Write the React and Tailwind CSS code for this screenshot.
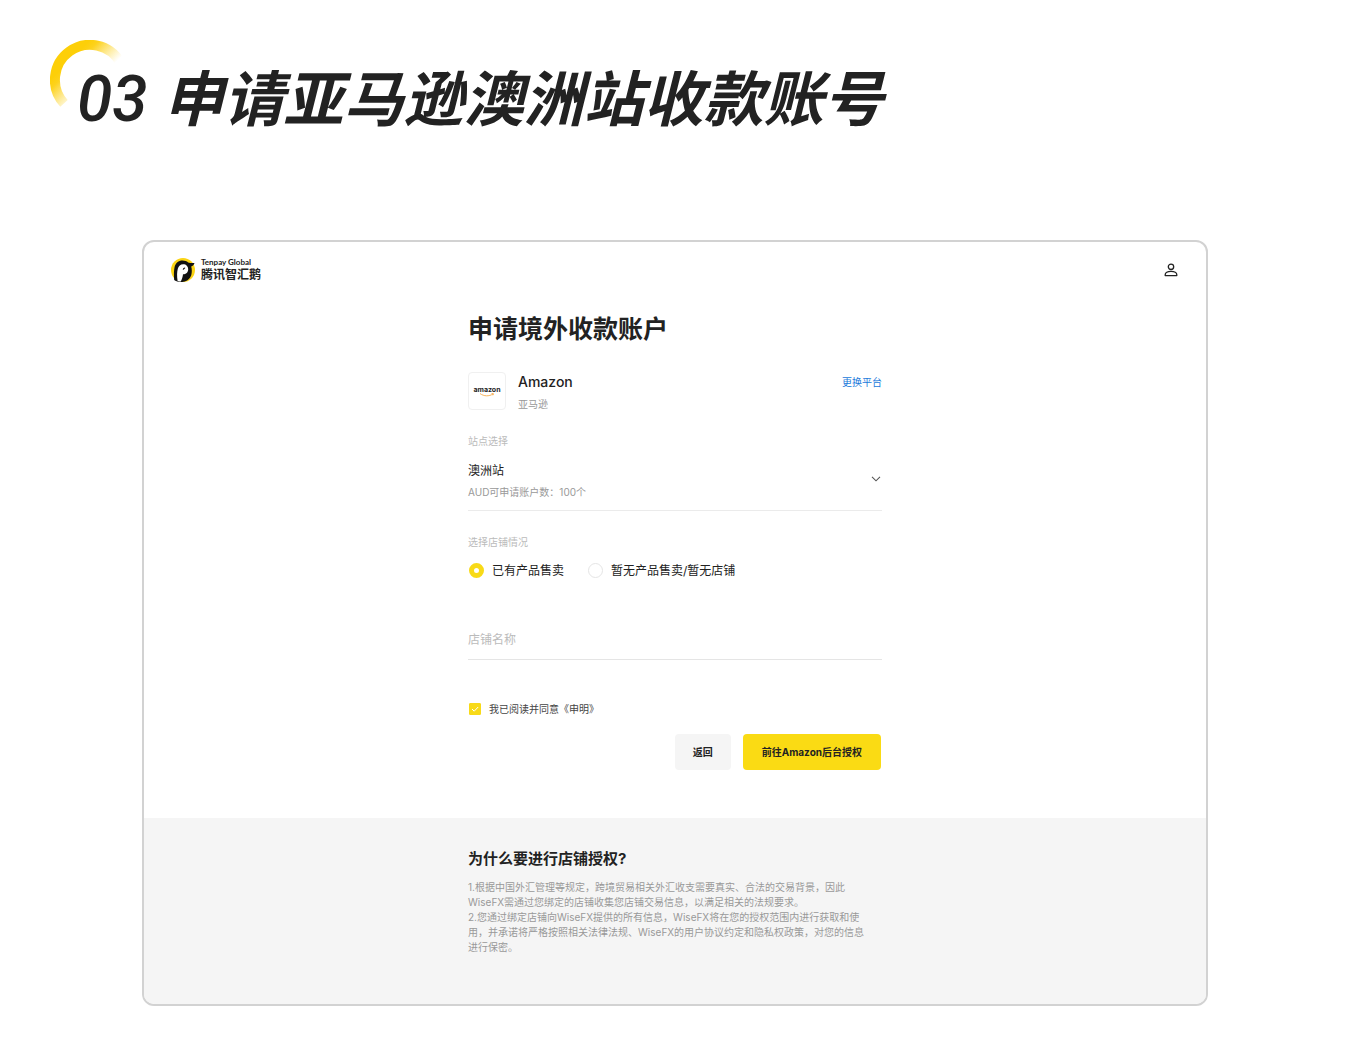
import { useState } from "react";

const ArcMark = () => (
  <svg viewBox="0 0 80 80" className="absolute left-[50px] top-10 h-20 w-20" aria-hidden="true">
    <defs>
      <linearGradient id="arc-fade" gradientUnits="userSpaceOnUse" x1="20" y1="20" x2="44" y2="44">
        <stop offset="0" stopColor="#fdcf08" />
        <stop offset="0.2" stopColor="#fdd21c" />
        <stop offset="1" stopColor="#fdd83c" stopOpacity="0" />
      </linearGradient>
    </defs>
    <path d="M14 63.400A35 35 0 1 1 70.300 22.500" fill="none" stroke="url(#arc-fade)" strokeWidth="10" />
  </svg>
);

const BrandLogo = () => (
  <svg viewBox="0 0 24 24" className="h-6 w-6" aria-hidden="true">
    <circle cx="12" cy="12" r="12" fill="#fbd414" />
    <path
      d="M3.200 22C2.700 17 2.900 12.500 3.500 9.500 4.500 5.200 7.500 2.600 11.500 2.600c2.300 0 4.200.7 5.700 1.900 2 .6 4 .7 6.300.4-.6 1.800-1.700 3-3.300 3.700.7 2.300.8 4.800.3 7.400-.7 3.900-3.700 6.900-7.500 7.800C9 24.500 5.500 23.800 3.200 22Z"
      fill="#111"
    />
    <path
      d="M6.600 23c-.7-4.500-.7-9 .2-12.200C7.500 8 9.500 6.200 12.200 6.200c2.900 0 5 2.100 5 5 0 3-2.200 5.100-5.200 5.100-.3 2.700-1 5-2.200 7.300-1.200 0-2.200-.2-3.200-.6Z"
      fill="#fff"
    />
    <path d="M12 11.400c.2-.9.8-1.500 1.800-1.600-.1.900-.7 1.500-1.800 1.600Z" fill="#111" stroke="#111" strokeWidth=".6" />
  </svg>
);

const UserIcon = () => (
  <svg viewBox="0 0 14 14" className="h-3.5 w-3.5" fill="none" stroke="#222" strokeWidth="1.3" aria-hidden="true">
    <circle cx="7" cy="3.800" r="2.700" />
    <path d="M1.200 12.600v-.8C1.200 9.600 3.400 8.400 7 8.400s5.800 1.200 5.800 3.400v.8Z" strokeLinejoin="round" />
  </svg>
);

const notes = [
  "1.根据中国外汇管理等规定，跨境贸易相关外汇收支需要真实、合法的交易背景，因此",
  "WiseFX需通过您绑定的店铺收集您店铺交易信息，以满足相关的法规要求。",
  "2.您通过绑定店铺向WiseFX提供的所有信息，WiseFX将在您的授权范围内进行获取和使",
  "用，并承诺将严格按照相关法律法规、WiseFX的用户协议约定和隐私权政策，对您的信息",
  "进行保密。",
];

const shopStates = [
  { value: "selling", label: "已有产品售卖" },
  { value: "none", label: "暂无产品售卖/暂无店铺" },
];

const App = () => {
  const [shopState, setShopState] = useState("selling");
  const [agreed, setAgreed] = useState(true);
  const [shopName, setShopName] = useState("");

  return (
    <div className="bg-white pb-8 font-['Inter','Noto_Sans_CJK_SC',sans-serif] text-[#222]">
      {/* Page title */}
      <header className="relative h-60 pl-[77px] pt-[59px]">
        <ArcMark />
        <h1 className="relative flex items-baseline gap-4 whitespace-nowrap font-['Noto_Sans_CJK_SC',sans-serif] text-[60px] font-bold italic leading-[72px]">
          <span className="font-['Roboto',sans-serif] text-[64px] font-medium">03</span>
          <span>申请亚马逊澳洲站收款账号</span>
        </h1>
      </header>

      <main className="ml-[142px] mr-[140px] overflow-hidden rounded-xl border-2 border-[#d2d2d2]">
        {/* Top bar */}
        <div className="flex h-14 items-center justify-between pl-[27px] pr-7">
          <div className="flex items-center gap-1.5">
            <BrandLogo />
            <div className="whitespace-nowrap font-bold">
              <p className="font-['Lato',sans-serif] text-[8px] leading-[10px]">Tenpay Global</p>
              <p className="text-xs leading-4">腾讯智汇鹅</p>
            </div>
          </div>
          <button type="button" aria-label="账户">
            <UserIcon />
          </button>
        </div>

        {/* Application form */}
        <form className="mx-auto h-[520px] max-w-[414px] pt-[13px]" onSubmit={(e) => e.preventDefault()}>
          <h2 className="text-[25px] font-bold leading-9">申请境外收款账户</h2>

          <div className="mt-[25px] flex gap-3">
            <div className="flex h-[38px] w-[38px] flex-col items-center justify-center rounded-sm border border-[#f0f0f0]">
              <span className="text-[7px] font-bold leading-[7px]">amazon</span>
              <svg viewBox="0 0 16 4" className="h-1 w-4" aria-hidden="true">
                <path d="M1 .5C5 3.500 10 3.500 14 1M12.500.6l2 .1-.6 1.600" fill="none" stroke="#f6a94a" strokeWidth=".9" />
              </svg>
            </div>
            <div className="flex-1">
              <p className="text-sm font-medium leading-5">Amazon</p>
              <p className="mt-1 text-[10px] leading-4 text-[#999]">亚马逊</p>
            </div>
            <a href="#platform" className="text-[10px] leading-5 text-[#1a7adb]">更换平台</a>
          </div>

          <label htmlFor="site" className="mt-[21px] block text-[10px] leading-4 text-[#bbb]">站点选择</label>
          <div className="relative mt-2 border-b border-[#ebebeb]">
            <select id="site" className="block h-[53px] w-full appearance-none bg-transparent pb-[26px] text-xs leading-5">
              <option>澳洲站</option>
            </select>
            <p className="pointer-events-none absolute bottom-2.5 left-0 text-[10px] leading-4 text-[#999]">
              AUD可申请账户数：100个
            </p>
            <svg viewBox="0 0 10 6" className="pointer-events-none absolute right-px top-[19px] h-1.5 w-2.5" aria-hidden="true">
              <path d="M1 .8l4 4 4-4" fill="none" stroke="#555" strokeWidth="1.100" />
            </svg>
          </div>

          <fieldset className="mt-[23px]">
            <legend className="text-[10px] leading-4 text-[#bbb]">选择店铺情况</legend>
            <div className="mt-[9px] flex gap-6 pl-px">
              {shopStates.map((s) => (
                <label key={s.value} className="flex items-center gap-2 text-xs leading-5">
                  <input
                    type="radio"
                    name="shopState"
                    checked={shopState === s.value}
                    onChange={() => setShopState(s.value)}
                    className="h-[15px] w-[15px] appearance-none rounded-full border border-[#e5e5e5] checked:border-5 checked:border-[#f8da18]"
                  />
                  <span className="pt-0.5">{s.label}</span>
                </label>
              ))}
            </div>
          </fieldset>

          <input
            type="text"
            aria-label="店铺名称"
            placeholder="店铺名称"
            value={shopName}
            onChange={(e) => setShopName(e.target.value)}
            className="mt-[35px] block h-11 w-full border-b border-[#e5e5e5] pt-1 text-xs outline-none placeholder:text-[#bbb]"
          />

          <label className="relative mt-[39px] flex items-center gap-2 pl-px text-[10px] leading-5 text-[#444]">
            <input
              type="checkbox"
              checked={agreed}
              onChange={(e) => setAgreed(e.target.checked)}
              className="h-3 w-3 appearance-none rounded-[1px] border border-[#e5e5e5] checked:border-[#f8da18] checked:bg-[#f8da18]"
            />
            <svg viewBox="0 0 12 12" className="pointer-events-none absolute left-px top-1 h-3 w-3" aria-hidden="true">
              <path d="M3 6l2.200 2.200L9.200 4" fill="none" stroke="#fff" />
            </svg>
            我已阅读并同意《申明》
          </label>

          <div className="mt-[15px] flex justify-end gap-3 pr-px text-[10px] font-bold">
            <button type="button" className="h-9 rounded-sm bg-[#f5f5f5] px-[18px]">返回</button>
            <button type="submit" className="h-9 rounded-sm bg-[#fadb14] px-[19px]">前往Amazon后台授权</button>
          </div>
        </form>

        {/* Authorisation notes */}
        <section className="h-[186px] bg-[#f5f5f5] pt-[31px]">
          <div className="mx-auto max-w-[414px]">
            <h3 className="text-[15px] font-bold leading-5">为什么要进行店铺授权?</h3>
            <div className="mt-[11px] text-[10px] leading-[15px] text-[#999]">
              {notes.map((line) => (
                <p key={line} className="whitespace-nowrap">{line}</p>
              ))}
            </div>
          </div>
        </section>
      </main>
    </div>
  );
};

export default App;
